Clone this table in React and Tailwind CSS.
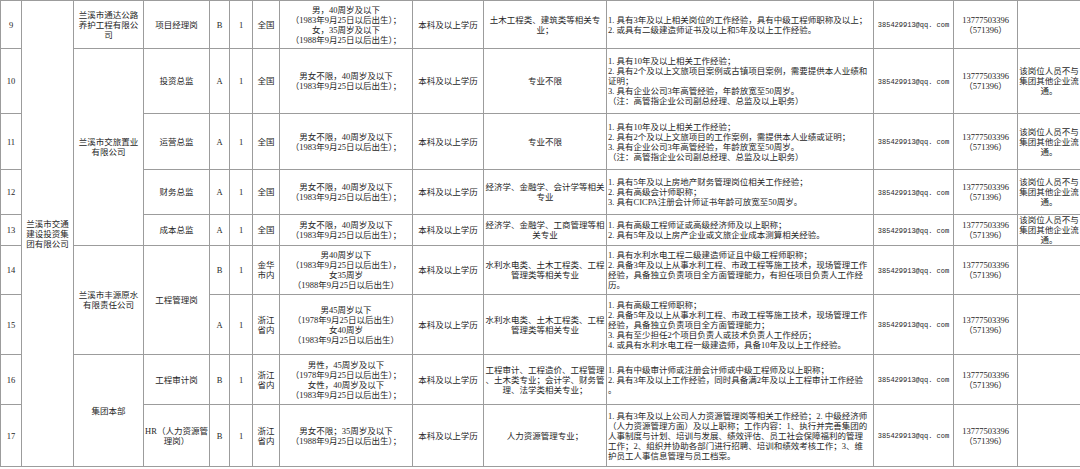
const EMAIL = '385429913@qq. com'

const rows = [
  {
    no: '9', h: 'h-[48px]', level: 'B', area: ['全国'],
    age: ['男，40周岁及以下', '（1983年9月25日以后出生）；', '女，35周岁及以下', '（1988年9月25日以后出生）；'],
    major: ['土木工程类、建筑类等相关专', '业；'],
    req: ['1. 具有3年及以上相关岗位的工作经验，具有中级工程师职称及以上；', '2. 或具有二级建造师证书及以上和5年及以上工作经验。'],
    note: null,
  },
  {
    no: '10', h: 'h-[65px]', level: 'A', area: ['全国'],
    age: ['男女不限，40周岁及以下', '（1983年9月25日以后出生）；'],
    major: ['专业不限'],
    req: ['1. 具有10年及以上相关工作经验；', '2. 具有2个及以上文旅项目案例或古镇项目案例，需要提供本人业绩和', '证明；', '3. 具有企业公司3年高管经验，年龄放宽至50周岁。', '（注：高管指企业公司副总经理、总监及以上职务）'],
    note: ['该岗位人员不与', '集团其他企业流', '通。'],
  },
  {
    no: '11', h: 'h-[56px]', level: 'A', area: ['全国'],
    age: ['男女不限，40周岁及以下', '（1983年9月25日以后出生）；'],
    major: ['专业不限'],
    req: ['1. 具有10年及以上相关工作经验；', '2. 具有2个及以上文旅项目的工作案例，需提供本人业绩或证明；', '3. 具有企业公司3年高管经验，年龄放宽至50周岁。', '（注：高管指企业公司副总经理、总监及以上职务）'],
    note: ['该岗位人员不与', '集团其他企业流', '通。'],
  },
  {
    no: '12', h: 'h-[45px]', level: 'A', area: ['全国'],
    age: ['男女不限，40周岁及以下', '（1983年9月25日以后出生）；'],
    major: ['经济学、金融学、会计学等相关', '专业'],
    req: ['1. 具有5年及以上房地产财务管理岗位相关工作经验；', '2. 具有高级会计师职称；', '3. 具有CICPA注册会计师证书年龄可放宽至50周岁。'],
    note: ['该岗位人员不与', '集团其他企业流', '通。'],
  },
  {
    no: '13', h: 'h-[31px]', level: 'A', area: ['全国'],
    age: ['男女不限，40周岁及以下', '（1983年9月25日以后出生）；'],
    major: ['经济学、金融学、工商管理等相', '关专业'],
    req: ['1. 具有高级工程师证或高级经济师及以上职称；', '2. 具有5年及以上房产企业或文旅企业成本测算相关经验。'],
    note: ['该岗位人员不与', '集团其他企业流', '通。'],
  },
  {
    no: '14', h: 'h-[49px]', level: 'B', area: ['金华', '市内'],
    age: ['男40周岁以下', '（1983年9月25日以后出生），', '女35周岁', '（1988年9月25日以后出生）'],
    major: ['水利水电类、土木工程类、工程', '管理类等相关专业'],
    req: ['1. 具有水利水电工程二级建造师证且中级工程师职称；', '2. 具备3年及以上从事水利工程、市政工程等施工技术，现场管理工作', '经验，具备独立负责项目全方面管理能力，有担任项目负责人工作经', '历。'],
    note: null,
  },
  {
    no: '15', h: 'h-[60px]', level: 'A', area: ['浙江', '省内'],
    age: ['男45周岁以下', '（1978年9月25日以后出生）', '女40周岁', '（1983年9月25日以后出生）'],
    major: ['水利水电类、土木工程类、工程', '管理类等相关专业'],
    req: ['1. 具有高级工程师职称；', '2. 具备5年及以上从事水利工程、市政工程等施工技术，现场管理工作', '经验，具备独立负责项目全方面管理能力；', '3. 具有至少担任2个项目负责人或技术负责人工作经历；', '4. 或具有水利水电工程一级建造师，具备10年及以上工作经验。'],
    note: null,
  },
  {
    no: '16', h: 'h-[50px]', level: 'B', area: ['浙江', '省内'],
    age: ['男性，45周岁及以下', '（1978年9月25日以后出生）；', '女性，40周岁及以下', '（1983年9月25日以后出生）；'],
    major: ['工程审计、工程造价、工程管理', '、土木类专业；会计学、财务管', '理、法学类相关专业；'],
    req: ['1. 具有中级审计师或注册会计师或中级工程师及以上职称；', '2. 具有3年及以上工作经验，同时具备满2年及以上工程审计工作经验', '。'],
    note: null,
  },
  {
    no: '17', h: 'h-[62px]', level: 'B', area: ['浙江', '省内'],
    age: ['男女不限；35周岁及以下', '（1988年9月25日以后出生）；'],
    major: ['人力资源管理专业；'],
    req: ['1. 具有3年及以上公司人力资源管理岗等相关工作经验；2. 中级经济师', '（人力资源管理方面）及以上职称；工作内容：1、执行并完善集团的', '人事制度与计划、培训与发展、绩效评估、员工社会保障福利的管理', '工作；2、组织并协助各部门进行招聘、培训和绩效考核工作；3、维', '护员工人事信息管理与员工档案。'],
    note: null,
  },
]

// merged cells in the company / position columns, keyed by row index
const merged = {
  0: [
    { span: 9, lines: ['兰溪市交通', '建设投资集', '团有限公司'] },
    { span: 1, lines: ['兰溪市通达公路', '养护工程有限公', '司'] },
    { span: 1, lines: ['项目经理岗'] },
  ],
  1: [
    { span: 4, lines: ['兰溪市交旅置业', '有限公司'] },
    { span: 1, lines: ['投资总监'] },
  ],
  2: [{ span: 1, lines: ['运营总监'] }],
  3: [{ span: 1, lines: ['财务总监'] }],
  4: [{ span: 1, lines: ['成本总监'] }],
  5: [
    { span: 2, lines: ['兰溪市丰源原水', '有限责任公司'] },
    { span: 2, lines: ['工程管理岗'] },
  ],
  6: [],
  7: [
    { span: 2, lines: ['集团本部'] },
    { span: 1, lines: ['工程审计岗'] },
  ],
  8: [{ span: 1, lines: ['HR（人力资源管', '理岗）'] }],
}

const cell = 'border border-[#9c9c9c] p-0 align-middle text-center'

function Lines({ lines, className = '' }) {
  return (
    <div className={className}>
      {lines.map((l, i) => (
        <div key={i} className="whitespace-nowrap">{l}</div>
      ))}
    </div>
  )
}

export default function App() {
  return (
    <div className="w-[1080px] h-[469px] bg-white overflow-hidden">
      <table
        className="w-[1080px] table-fixed border-collapse text-[8.5px] leading-[10px] text-[#262626]"
        style={{ fontFamily: '"Liberation Serif", "Noto Sans CJK SC", serif' }}
      >
        <colgroup>
          <col className="w-[21px]" />
          <col className="w-[52px]" />
          <col className="w-[70px]" />
          <col className="w-[66px]" />
          <col className="w-[20px]" />
          <col className="w-[23px]" />
          <col className="w-[27px]" />
          <col className="w-[133px]" />
          <col className="w-[71px]" />
          <col className="w-[123px]" />
          <col className="w-[267px]" />
          <col className="w-[80px]" />
          <col className="w-[64px]" />
          <col className="w-[63px]" />
        </colgroup>
        <tbody>
          {rows.map((r, i) => (
            <tr key={r.no} className={r.h}>
              <td className={cell}>{r.no}</td>
              {merged[i].map((m, j) => (
                <td key={j} rowSpan={m.span} className={cell}>
                  <Lines lines={m.lines} />
                </td>
              ))}
              <td className={cell}>{r.level}</td>
              <td className={cell}>1</td>
              <td className={cell}><Lines lines={r.area} /></td>
              <td className={cell}><Lines lines={r.age} /></td>
              <td className={cell}>本科及以上学历</td>
              <td className={cell}><Lines lines={r.major} /></td>
              <td className={`${cell} !text-left pl-[1px]`}><Lines lines={r.req} /></td>
              <td className={cell}>
                <span className="text-[7px]" style={{ fontFamily: '"Liberation Mono", monospace' }}>{EMAIL}</span>
              </td>
              <td className={cell}><Lines lines={['13777503396', '（571396）']} /></td>
              <td className={cell}>{r.note && <Lines lines={r.note} />}</td>
            </tr>
          ))}
        </tbody>
      </table>
    </div>
  )
}
